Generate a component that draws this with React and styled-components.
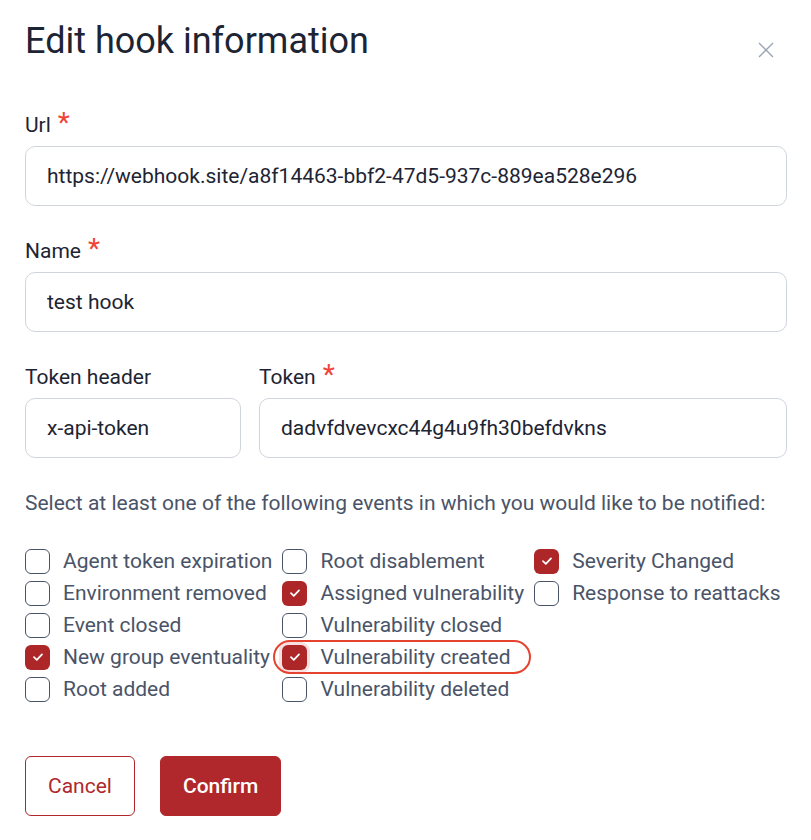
import React from "react";
import styled, { createGlobalStyle } from "styled-components";

const GlobalStyle = createGlobalStyle`
  body {
    margin: 0;
    background: #ffffff;
    font-family: Roboto, "Liberation Sans", sans-serif;
  }
`;

const Modal = styled.div`
  width: 811px;
  padding: 19px 24px 24px 25px;
  box-sizing: border-box;
`;

const Header = styled.div`
  display: flex;
  justify-content: space-between;
  align-items: flex-start;
`;

const Title = styled.h2`
  margin: 0;
  font-size: 36px;
  line-height: 44px;
  font-weight: 400;
  color: #1d2433;
`;

const CloseButton = styled.button`
  border: none;
  background: none;
  padding: 0;
  margin: 23px 13px 0 0;
  width: 16px;
  height: 16px;
  cursor: pointer;
  display: flex;
`;

const Form = styled.div`
  display: flex;
  flex-direction: column;
  gap: 33px;
  margin-top: 50px;
`;

const Row = styled.div`
  display: flex;
  gap: 18px;
`;

const Field = styled.label`
  display: flex;
  flex-direction: column;
  gap: 9px;
  width: ${(p) => p.width || "100%"};
  flex: ${(p) => (p.width ? "none" : "1")};
`;

const LabelText = styled.span`
  font-size: 21px;
  line-height: 24px;
  color: #1d2433;
  display: flex;
  align-items: flex-start;
`;

const Required = styled.span`
  color: #f04438;
  font-size: 28px;
  line-height: 20px;
  margin-left: 7px;
  margin-top: 0px;
`;

const Input = styled.input`
  height: 60px;
  box-sizing: border-box;
  border: 1px solid #d0d5dd;
  border-radius: 10px;
  padding: 0 21px;
  font-family: inherit;
  font-size: 21px;
  color: #1d2433;
  outline: none;
  width: 100%;
`;

const Help = styled.p`
  margin: 0;
  font-size: 21px;
  line-height: 24px;
  color: #4a5468;
`;

const Events = styled.div`
  display: grid;
  grid-auto-flow: column;
  grid-template-rows: repeat(5, 32px);
  grid-auto-columns: max-content;
  column-gap: 10px;
  margin-top: 30px;
`;

const Item = styled.label`
  position: relative;
  display: flex;
  align-items: center;
  gap: 13px;
  font-size: 21px;
  color: #4a5468;
  cursor: pointer;

  ${(p) =>
    p.highlight &&
    `
    &::after {
      content: "";
      position: absolute;
      left: -9px;
      right: -7px;
      top: -1px;
      bottom: -1px;
      border: 2px solid #e5432f;
      border-radius: 18px;
      pointer-events: none;
    }
  `}
`;

const Box = styled.span`
  width: 25px;
  height: 25px;
  box-sizing: border-box;
  border-radius: 6px;
  border: ${(p) => (p.checked ? "none" : "1.5px solid #4a5468")};
  background: ${(p) => (p.checked ? "#ad2628" : "#ffffff")};
  display: flex;
  align-items: center;
  justify-content: center;
  flex: none;
  box-shadow: ${(p) => (p.focused ? "0 0 0 3px #f8dfe0" : "none")};
`;

const Actions = styled.div`
  display: flex;
  gap: 25px;
  margin-top: 51px;
`;

const Button = styled.button`
  height: 60px;
  padding: 0 22px;
  border-radius: 6px;
  font-family: inherit;
  font-size: 21px;
  font-weight: ${(p) => (p.primary ? 500 : 400)};
  cursor: pointer;
  border: 1px solid #b0282b;
  background: ${(p) => (p.primary ? "#b0282b" : "#ffffff")};
  color: ${(p) => (p.primary ? "#ffffff" : "#b0282b")};
`;

const events = [
  { label: "Agent token expiration" },
  { label: "Environment removed" },
  { label: "Event closed" },
  { label: "New group eventuality", checked: true },
  { label: "Root added" },
  { label: "Root disablement" },
  { label: "Assigned vulnerability", checked: true },
  { label: "Vulnerability closed" },
  { label: "Vulnerability created", checked: true, highlight: true },
  { label: "Vulnerability deleted" },
  { label: "Severity Changed", checked: true },
  { label: "Response to reattacks" },
];

const Check = () => (
  <svg width="12" height="10" viewBox="0 0 12 10" fill="none">
    <path d="M2 5.2 L4.8 7.8 L10 2.4" stroke="#fff" strokeWidth="1.8" strokeLinecap="round" strokeLinejoin="round" />
  </svg>
);

const Label = ({ children, required }) => (
  <LabelText>
    {children}
    {required && <Required>*</Required>}
  </LabelText>
);

export default function App() {
  return (
    <Modal>
      <GlobalStyle />
      <Header>
        <Title>Edit hook information</Title>
        <CloseButton aria-label="Close">
          <svg width="16" height="16" viewBox="0 0 16 16">
            <path d="M1 1 L15 15 M15 1 L1 15" stroke="#98a2b3" strokeWidth="1.3" />
          </svg>
        </CloseButton>
      </Header>
      <Form>
        <Field>
          <Label required>Url</Label>
          <Input defaultValue="https://webhook.site/a8f14463-bbf2-47d5-937c-889ea528e296" />
        </Field>
        <Field>
          <Label required>Name</Label>
          <Input defaultValue="test hook" />
        </Field>
        <Row>
          <Field width="216px">
            <Label>Token header</Label>
            <Input defaultValue="x-api-token" />
          </Field>
          <Field>
            <Label required>Token</Label>
            <Input defaultValue="dadvfdvevcxc44g4u9fh30befdvkns" />
          </Field>
        </Row>
        <Help>Select at least one of the following events in which you would like to be notified:</Help>
      </Form>
      <Events>
        {events.map((e) => (
          <Item key={e.label} highlight={e.highlight}>
            <Box checked={e.checked} focused={e.highlight}>
              {e.checked && <Check />}
            </Box>
            {e.label}
          </Item>
        ))}
      </Events>
      <Actions>
        <Button>Cancel</Button>
        <Button primary>Confirm</Button>
      </Actions>
    </Modal>
  );
}
